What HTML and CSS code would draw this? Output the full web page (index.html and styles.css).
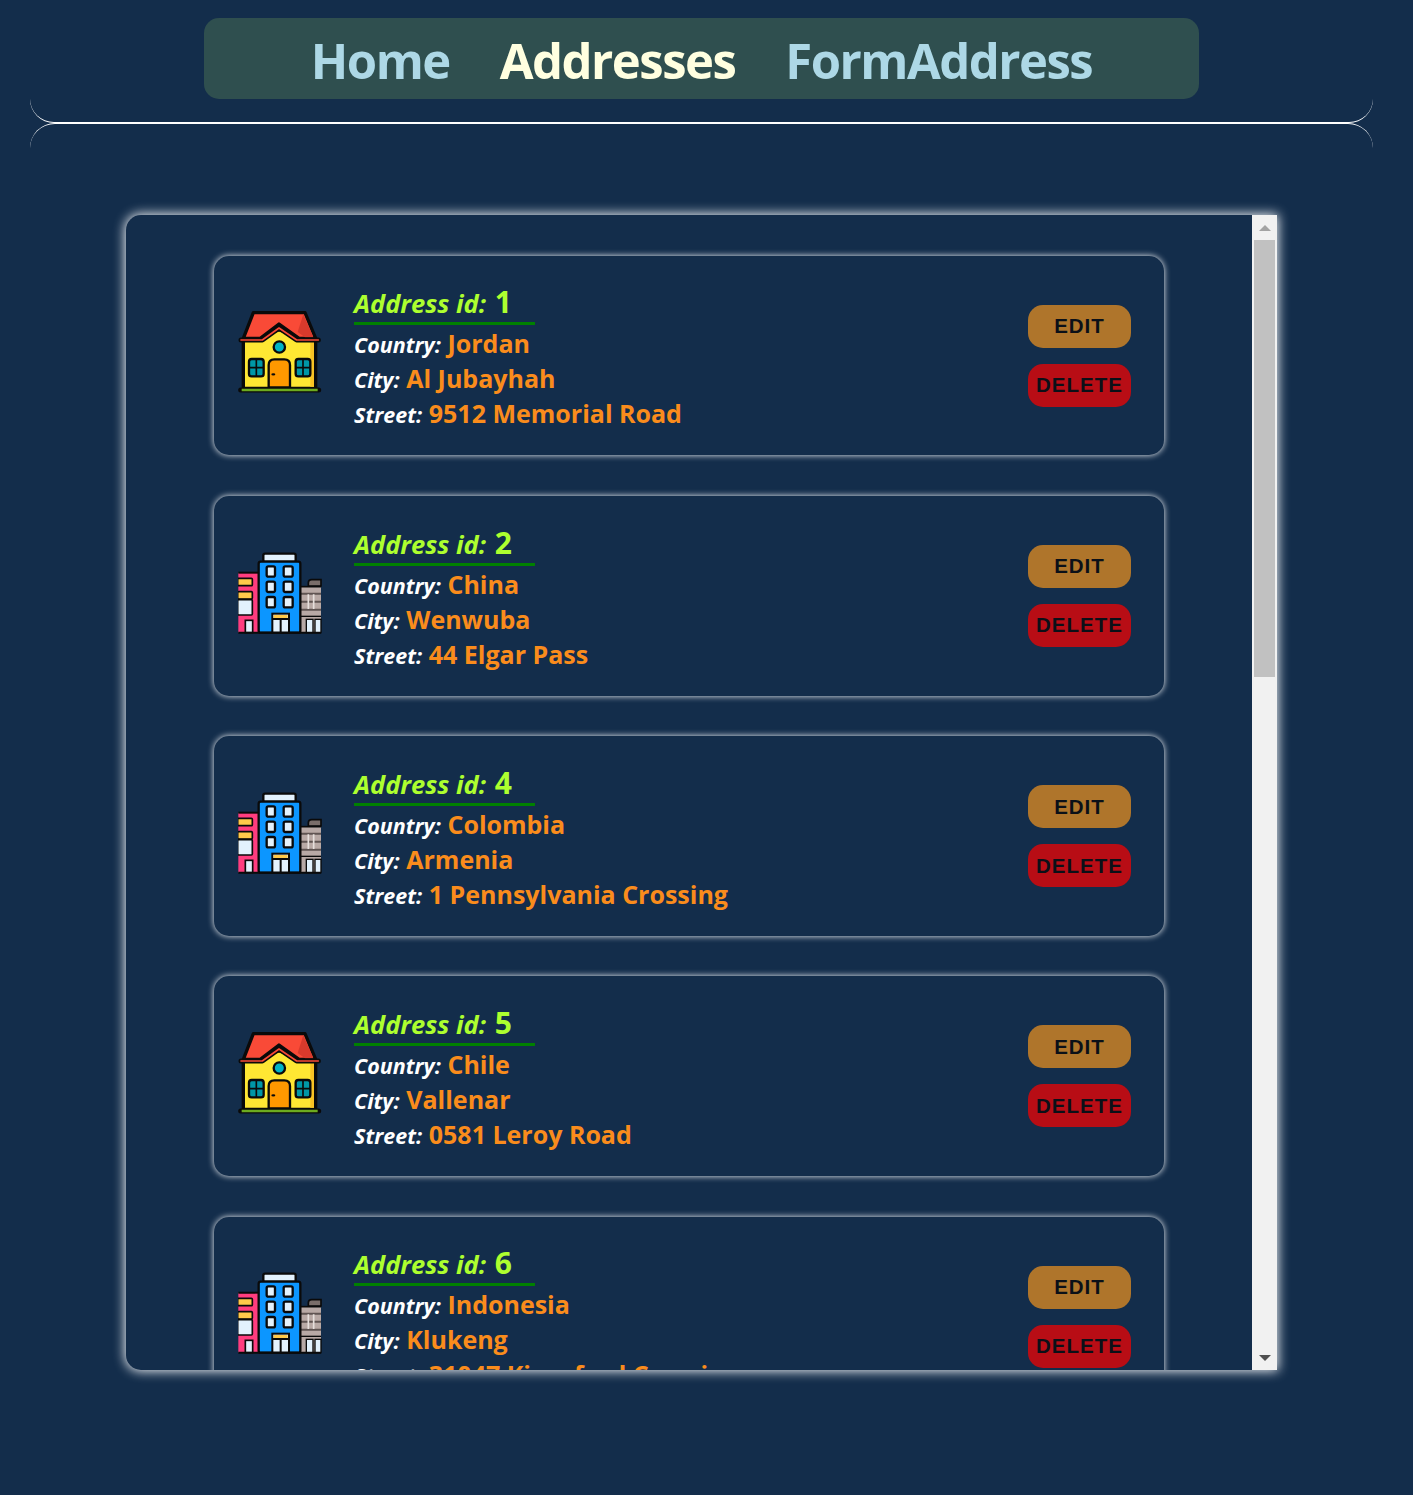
FILE: index.html
```html
<!DOCTYPE html>
<html>
<head>
    <meta charset="utf-8">
    <meta name="viewport" content="width=device-width, initial-scale=1">
    <title>Addresses</title>
    <link rel="stylesheet" href="styles.css">
</head>
<body>
    <svg class="sprite" xmlns="http://www.w3.org/2000/svg">
        <symbol id="icon-house" viewBox="39 30 252 252">
            <path d="M55 120 L162 90 L272 120 V265 H55 Z" fill="#ffe733" stroke="#0a0a0a" stroke-width="10"/>
            <rect x="256" y="125" width="11" height="135" fill="#f8c224"/>
            <path d="M85 38 H240 L272 115 H222 L162 72 L106 115 H55 Z" fill="#f94a37" stroke="#0a0a0a" stroke-width="10" stroke-linejoin="round"/>
            <path d="M235 43 L265 112 H240 L218 96 Z" fill="#d83a2c"/>
            <path d="M48 120 H112 L162 84 L215 120 H280" fill="none" stroke="#0a0a0a" stroke-width="15" stroke-linecap="round" stroke-linejoin="round"/>
            <path d="M48 120 H112 L162 84 L215 120 H280" fill="none" stroke="#f94a37" stroke-width="5" stroke-linecap="round" stroke-linejoin="round"/>
            <circle cx="163" cy="141" r="17" fill="#00b3c6" stroke="#0a0a0a" stroke-width="7"/>
            <rect x="72" y="177" width="44" height="52" rx="8" fill="#0097a7" stroke="#0a0a0a" stroke-width="7"/>
            <rect x="212" y="177" width="44" height="52" rx="8" fill="#0097a7" stroke="#0a0a0a" stroke-width="7"/>
            <path d="M94 177 V229 M72 203 H116 M234 177 V229 M212 203 H256" stroke="#0a0a0a" stroke-width="5"/>
            <path d="M131 262 V195 Q131 178 148 178 H178 Q195 178 195 195 V262 Z" fill="#ff9800" stroke="#0a0a0a" stroke-width="7"/>
            <ellipse cx="145" cy="223" rx="6" ry="3.5" fill="#0a0a0a"/>
            <path d="M47 270 H281" stroke="#0a0a0a" stroke-width="15" stroke-linecap="round"/>
            <path d="M50 270 H278" stroke="#6cab1f" stroke-width="8"/>
        </symbol>
        <symbol id="icon-buildings" viewBox="39 30 252 252">
            <rect x="228" y="135" width="60" height="140" fill="#b8a9a5"/>
            <path d="M250 135 V125 Q250 116 260 116 H288 V135 Z" fill="#7a6e6a" stroke="#0a0a0a" stroke-width="5"/>
            <path d="M228 137 H288" stroke="#0a0a0a" stroke-width="5"/>
            <path d="M228 158 H288 M228 182 H288 M228 206 H288" stroke="#5f5452" stroke-width="6"/>
            <path d="M228 226 H288" stroke="#0a0a0a" stroke-width="4"/>
            <path d="M250 160 V204 M266 160 V204" stroke="#e6dfdc" stroke-width="5"/>
            <rect x="244" y="235" width="20" height="40" fill="#e3f2fd" stroke="#0a0a0a" stroke-width="4"/>
            <rect x="270" y="235" width="18" height="40" fill="#e3f2fd" stroke="#0a0a0a" stroke-width="4"/>

            <rect x="40" y="95" width="60" height="180" fill="#ff3d7f"/>
            <path d="M40 95 H100" stroke="#0a0a0a" stroke-width="6"/>
            <rect x="38" y="112" width="44" height="22" rx="3" fill="#ffc94a" stroke="#0a0a0a" stroke-width="5"/>
            <rect x="38" y="152" width="44" height="22" rx="3" fill="#ffc94a" stroke="#0a0a0a" stroke-width="5"/>
            <rect x="38" y="176" width="44" height="46" rx="3" fill="#e3f2fd" stroke="#0a0a0a" stroke-width="5"/>
            <rect x="61" y="238" width="22" height="37" fill="#e3f2fd" stroke="#0a0a0a" stroke-width="5"/>

            <rect x="115" y="38" width="97" height="24" rx="5" fill="#e3f2fd" stroke="#0a0a0a" stroke-width="7"/>
            <rect x="101" y="62" width="125" height="213" rx="6" fill="#0c96ff" stroke="#0a0a0a" stroke-width="7"/>
            <g fill="#e3f2fd" stroke="#0a0a0a" stroke-width="7">
                <rect x="125" y="76" width="25" height="31" rx="5"/>
                <rect x="176" y="76" width="27" height="31" rx="5"/>
                <rect x="125" y="122" width="25" height="31" rx="5"/>
                <rect x="176" y="122" width="27" height="31" rx="5"/>
                <rect x="125" y="168" width="25" height="31" rx="5"/>
                <rect x="176" y="168" width="27" height="31" rx="5"/>
            </g>
            <rect x="142" y="218" width="50" height="57" fill="#e3f2fd" stroke="#0a0a0a" stroke-width="6"/>
            <rect x="146" y="222" width="42" height="10" fill="#ffc94a"/>
            <path d="M142 234 H192 M167 234 V275" stroke="#0a0a0a" stroke-width="6"/>
            <path d="M40 275 H288" stroke="#0a0a0a" stroke-width="6"/>
        </symbol>
    </svg>

    <div class="page">
        <nav class="topnav">
            <a href="#">Home</a>
            <a href="#" class="active">Addresses</a>
            <a href="#">FormAddress</a>
        </nav>
        <div class="rule rule-top"></div>
        <div class="rule rule-bottom"></div>

        <main class="panel">
            <div class="address-list">
                <div class="address-card">
                    <svg class="address-icon"><use href="#icon-house"/></svg>
                    <div class="address-info">
                        <div class="address-id"><em>Address id:</em> <span>1</span></div>
                        <div class="address-row"><em>Country:</em> <span>Jordan</span></div>
                        <div class="address-row"><em>City:</em> <span>Al Jubayhah</span></div>
                        <div class="address-row"><em>Street:</em> <span>9512 Memorial Road</span></div>
                    </div>
                    <div class="address-actions">
                        <button class="btn btn-edit">EDIT</button>
                        <button class="btn btn-delete">DELETE</button>
                    </div>
                </div>

                <div class="address-card">
                    <svg class="address-icon"><use href="#icon-buildings"/></svg>
                    <div class="address-info">
                        <div class="address-id"><em>Address id:</em> <span>2</span></div>
                        <div class="address-row"><em>Country:</em> <span>China</span></div>
                        <div class="address-row"><em>City:</em> <span>Wenwuba</span></div>
                        <div class="address-row"><em>Street:</em> <span>44 Elgar Pass</span></div>
                    </div>
                    <div class="address-actions">
                        <button class="btn btn-edit">EDIT</button>
                        <button class="btn btn-delete">DELETE</button>
                    </div>
                </div>

                <div class="address-card">
                    <svg class="address-icon"><use href="#icon-buildings"/></svg>
                    <div class="address-info">
                        <div class="address-id"><em>Address id:</em> <span>4</span></div>
                        <div class="address-row"><em>Country:</em> <span>Colombia</span></div>
                        <div class="address-row"><em>City:</em> <span>Armenia</span></div>
                        <div class="address-row"><em>Street:</em> <span>1 Pennsylvania Crossing</span></div>
                    </div>
                    <div class="address-actions">
                        <button class="btn btn-edit">EDIT</button>
                        <button class="btn btn-delete">DELETE</button>
                    </div>
                </div>

                <div class="address-card">
                    <svg class="address-icon"><use href="#icon-house"/></svg>
                    <div class="address-info">
                        <div class="address-id"><em>Address id:</em> <span>5</span></div>
                        <div class="address-row"><em>Country:</em> <span>Chile</span></div>
                        <div class="address-row"><em>City:</em> <span>Vallenar</span></div>
                        <div class="address-row"><em>Street:</em> <span>0581 Leroy Road</span></div>
                    </div>
                    <div class="address-actions">
                        <button class="btn btn-edit">EDIT</button>
                        <button class="btn btn-delete">DELETE</button>
                    </div>
                </div>

                <div class="address-card">
                    <svg class="address-icon"><use href="#icon-buildings"/></svg>
                    <div class="address-info">
                        <div class="address-id"><em>Address id:</em> <span>6</span></div>
                        <div class="address-row"><em>Country:</em> <span>Indonesia</span></div>
                        <div class="address-row"><em>City:</em> <span>Klukeng</span></div>
                        <div class="address-row"><em>Street:</em> <span>31047 Kingsford Crossing</span></div>
                    </div>
                    <div class="address-actions">
                        <button class="btn btn-edit">EDIT</button>
                        <button class="btn btn-delete">DELETE</button>
                    </div>
                </div>
            </div>

            <div class="scrollbar">
                <div class="scroll-arrow"><span class="arrow-up"></span></div>
                <div class="scroll-track"><div class="scroll-thumb"></div></div>
                <div class="scroll-arrow"><span class="arrow-down"></span></div>
            </div>
        </main>
    </div>
</body>
</html>
```

FILE: styles.css
```css
html, body {
    margin: 0;
    background: #132d4b;
}
body {
    font-family: "Open Sans", "Noto Sans", sans-serif;
    height: 1495px;
    overflow: hidden;
}
.sprite {
    display: none;
}
.page {
    width: 1403px;
    padding-top: 18px;
}

/* top navigation */
.topnav {
    width: 995px;
    height: 81px;
    margin: 0 auto;
    display: flex;
    justify-content: center;
    align-items: center;
    gap: 50px;
    background: #2f4f4f;
    border-radius: 15px;
}
.topnav a {
    color: #add8e6;
    font-size: 49px;
    font-weight: 700;
    letter-spacing: -1.5px;
    text-decoration: none;
    padding-top: 3px;
}
.topnav a.active {
    color: #ffffe0;
}

/* two curved lines under the nav */
.rule {
    width: 1343px;
    height: 24px;
    margin: 0 auto;
    box-sizing: border-box;
    border-radius: 25px;
}
.rule-top {
    border-bottom: 1px solid #fff;
    border-top-left-radius: 0;
    border-top-right-radius: 0;
}
.rule-bottom {
    border-top: 1px solid #fff;
    border-bottom-left-radius: 0;
    border-bottom-right-radius: 0;
    height: 68px;
}

/* panel with the list and its scrollbar */
.panel {
    width: 1151px;
    height: 1155px;
    margin: 24px auto 0;
    display: flex;
    border-radius: 15px 0 0 15px;
    box-shadow: 0 0 12px 1px #f4f6f8;
    background: #132d4b;
}
.address-list {
    flex: 1;
    min-width: 0;
    overflow: hidden;
    box-sizing: border-box;
    padding-top: 40.5px;
    border-radius: 15px 0 0 15px;
}
.scrollbar {
    width: 25px;
    display: flex;
    flex-direction: column;
    background: #f1f1f1;
}
.scroll-arrow {
    height: 25px;
    display: flex;
    justify-content: center;
    align-items: center;
}
.arrow-up {
    border-left: 6px solid transparent;
    border-right: 6px solid transparent;
    border-bottom: 6px solid #a3a3a3;
}
.arrow-down {
    border-left: 6px solid transparent;
    border-right: 6px solid transparent;
    border-top: 6px solid #505050;
}
.scroll-track {
    flex: 1;
    padding: 0 2px;
}
.scroll-thumb {
    height: 437px;
    background: #c1c1c1;
}

/* address cards */
.address-card {
    width: 950px;
    height: 199.75px;
    margin: 0 0 40.5px 88px;
    box-sizing: border-box;
    padding: 0 33px 0 24px;
    display: flex;
    align-items: center;
    border-radius: 15px;
    box-shadow: 0 0 6px #f4f6f8;
}
.address-icon {
    width: 84px;
    height: 84px;
    flex-shrink: 0;
    margin: 0 32px 6px 0;
}
.address-info {
    flex: 1;
}
.address-info em {
    font-style: italic;
    font-weight: 700;
}
.address-id {
    width: 181px;
    height: 43px;
    margin-bottom: -2px;
    box-sizing: border-box;
    border-bottom: 3px solid #008000;
    color: #adff2f;
    font-size: 25.5px;
    line-height: 40px;
    font-weight: 700;
    white-space: nowrap;
}
.address-id span {
    font-size: 30px;
    margin-left: 2px;
}
.address-row {
    height: 35px;
    line-height: 40px;
    color: #fff;
    font-size: 21.5px;
    white-space: nowrap;
}
.address-row span {
    margin-left: 1px;
    color: #fa8c1c;
    font-size: 25px;
    font-weight: 700;
}
.address-actions {
    display: flex;
    flex-direction: column;
    gap: 16px;
    margin-top: 0.5px;
}
.btn {
    width: 103px;
    height: 43px;
    padding: 0;
    border: none;
    border-radius: 15px;
    color: #0b1018;
    font-family: "Liberation Sans", sans-serif;
    font-size: 20.5px;
    font-weight: 700;
    letter-spacing: 1px;
    cursor: pointer;
}
.btn-edit {
    background: #af752b;
}
.btn-delete {
    background: #b80d15;
}
```
